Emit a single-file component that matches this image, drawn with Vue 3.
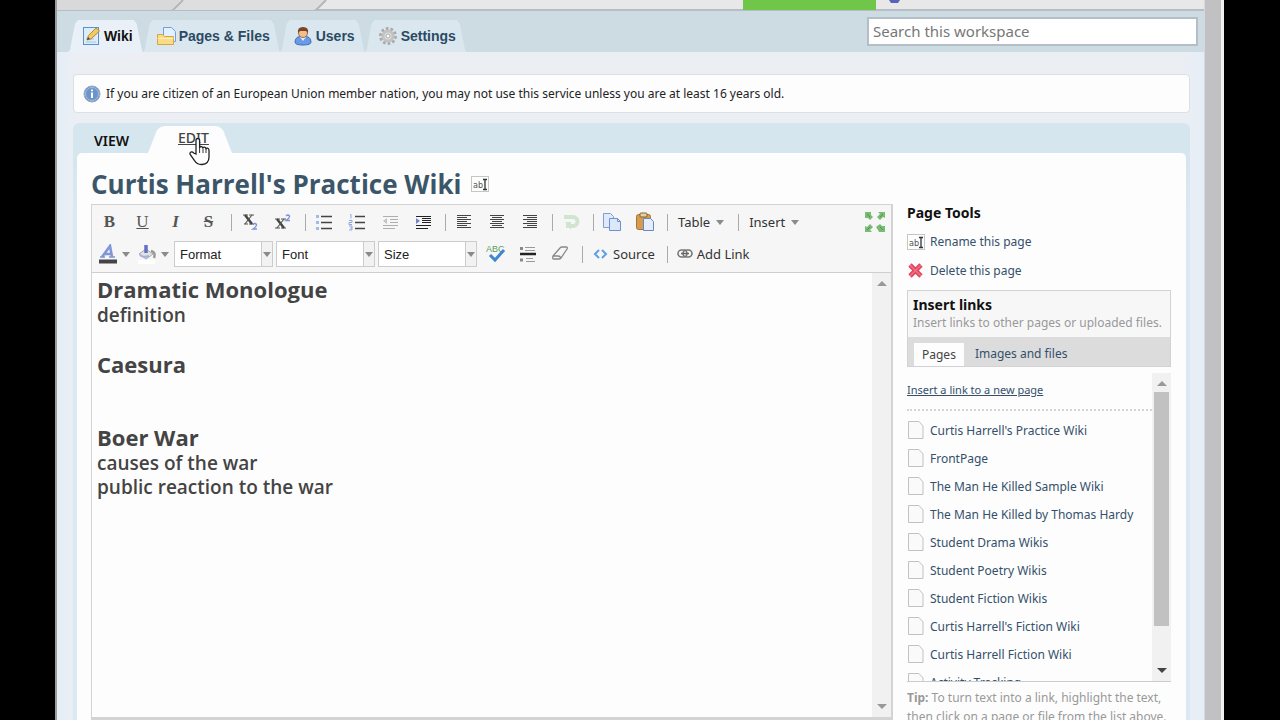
<script setup>
import { ref } from 'vue'

const svg = (body, w = 20, h = 20) =>
  `<svg width="${w}" height="${h}" viewBox="0 0 ${w} ${h}" fill="none" aria-hidden="true">${body}</svg>`

const lines = (rows, color = '#444') =>
  rows.map(([x, y, w]) => `<path d="M${x} ${y}.5h${w}" stroke="${color}"/>`).join('')

const fullRows = [[3, 3, 14], [3, 5, 10], [3, 7, 14], [3, 9, 10], [3, 11, 14], [3, 13, 10], [3, 15, 14]]
const shift = (d) => fullRows.map(([x, y, w]) => (w === 10 ? [x + d, y, w] : [x, y, w]))

const icons = {
  sub: svg('<path d="M3 3h5M9 3h5M4 12h4M9 12h5" stroke="#555"/><path d="M5 3l7 9" stroke="#444" stroke-width="2.4"/><path d="M12 3l-7 9" stroke="#555" stroke-width="1.2"/><path d="M13 12.500q2-2 3.500 0q.5 1.500-3.500 4.500h4" stroke="#7d95d6" stroke-width="1.400"/>'),
  sup: svg('<path d="M2 7h5M8 7h5M2 16h5M8 16h5" stroke="#555"/><path d="M4 7l7 9" stroke="#444" stroke-width="2.4"/><path d="M11 7l-7 9" stroke="#555" stroke-width="1.2"/><path d="M13 4q2-2 3.500 0q.5 1.500-3.500 4.500h4" stroke="#7d95d6" stroke-width="1.400"/>'),
  ul: svg('<path d="M7 4.500h11M7 10.500h11M7 16.500h11" stroke="#444" stroke-width="1.300"/><rect x="2" y="3" width="3" height="3" fill="#9dbce6"/><rect x="2" y="9" width="3" height="3" fill="#9dbce6"/><rect x="2" y="15" width="3" height="3" fill="#9dbce6"/>'),
  ol: svg('<path d="M8 4.500h10M8 10.500h10M8 16.500h10" stroke="#444" stroke-width="1.300"/><path d="M3 2.500h1v4M2 8.500h3v2h-3v2h3M2 14h3v4h-3M3 16h2" stroke="#8da9dc"/>'),
  outdent: svg('<g opacity=".4">' + lines([[3, 4, 15], [10, 7, 8], [10, 10, 8], [3, 13, 15], [3, 16, 12]]) + '<path d="M7 6v6l-4-3z" fill="#777"/></g>'),
  indent: svg(lines([[3, 4, 15], [9, 6, 9], [9, 8, 9], [9, 10, 9], [3, 13, 15], [3, 16, 12]], '#222') + '<path d="M3 6v6l4-3z" fill="#7189cc"/>'),
  left: svg(lines(fullRows)),
  center: svg(lines(shift(2))),
  right: svg(lines(shift(4))),
  undo: svg('<path d="M3 5h9a4 4 0 0 1 0 9H5" stroke="#cfe5cf" stroke-width="4"/><path d="M4 10h6v8z" fill="#cfe5cf"/>'),
  copy: svg('<path d="M1.500 1.500h7l3 3v11h-10z" fill="#dfe9fb" stroke="#7f9fd4"/><path d="M7.500 6.500h8l3 3v9h-11z" fill="#dce7fa" stroke="#6f90cc"/><path d="M15.500 6.500v3h3" stroke="#6f90cc"/>'),
  paste: svg('<rect x="1.500" y="2.500" width="14" height="15" rx="2" fill="#d59b4e" stroke="#ad7431"/><rect x="5" y="1" width="7" height="4" rx="1" fill="#e8d49b" stroke="#806338"/><path d="M8.500 6.500h7l3 3v9h-10z" fill="#e4edfb" stroke="#6a88bd"/>'),
  max: svg('<g fill="#79ba75"><path d="M1 1h6v3l2 2-3 3-2-2H1zM21 1h-7l2 2-3 3 3 3 3-3 2 1zM1 21h7l-2-2 3-3-3-3-3 3-2-1zM21 21h-6l-1-2-2-3 4-3 2 2h3z"/></g><path d="M3 3l3 3M19 3l-3 3M3 19l3-3M19 19l-3-3" stroke="#4c9549"/>', 22, 22),
  spell: svg('<text x="0" y="8" font-family="Liberation Sans" font-size="9" fill="#5c9b62">ABC</text><path d="M4 11l5 5 9-10" stroke="#3f87cf" stroke-width="3"/>'),
  hr: svg('<path d="M2 10h16" stroke="#222" stroke-width="2.500"/><path d="M7 3.500h10M7 6.500h10M8 14.500h7M8 17.500h9" stroke="#999"/><path d="M2 4.500h3M2 16h3" stroke="#888" stroke-width="3"/>'),
  erase: svg('<path d="M3 12l7-8q1-1 2-1h4q2 0 1 2l-6 9q-1 1-2 1H4q-2 0-1-3zM3 12h5q2 0 3 2" stroke="#888" stroke-width="1.300"/>'),
  source: svg('<path d="M6 3L2 7l4 4M9 3l4 4-4 4" stroke="#5da0e6" stroke-width="2"/>', 15, 14),
  link: svg('<rect x="1" y="2" width="9" height="7" rx="3.500" stroke="#777" stroke-width="1.600"/><rect x="6" y="2" width="9" height="7" rx="3.500" stroke="#777" stroke-width="1.600"/><path d="M4 5.500h8" stroke="#666" stroke-width="1.500"/>', 16, 12),
  color: svg('<path d="M4 13L12 2l2 11M6 10h7" stroke="#7f97d8" stroke-width="2.600"/><path d="M2 13h5M11 13h6" stroke="#7f97d8" stroke-width="1.500"/><path d="M1 17.500h18" stroke="#444" stroke-width="4"/>'),
  fill: svg('<rect x="1" y="16" width="17" height="4" fill="#fff"/><path d="M2 10l7-5 7 5-7 5z" fill="#e2e2e2" stroke="#aaa"/><path d="M9 1v8" stroke="#6170c4" stroke-width="3.500"/><path d="M3 11q3 3 9 1" stroke="#a3b0dd" stroke-width="2"/><path d="M14 7q5 1 3 7" stroke="#999" stroke-width="2.500"/>'),
  wiki: svg('<rect x="2.500" y="1.500" width="15" height="17" fill="#dcecfb" stroke="#5b91cd"/><path d="M5 13h8M5 16h10" stroke="#a5c8ec"/><path d="M6 14l1.500-4.500L15 2l3.500 3L10 13z" fill="#f1cc5d" stroke="#bb8b32"/><path d="M6 14l1-3 2 2z" fill="#444"/>'),
  files: svg('<path d="M7.500 1.500h8l4 4v10h-12z" fill="#e3f0fd" stroke="#6fa1dc"/><path d="M1.500 8.500h5l2 2h9v8h-16z" fill="#f9dc83" stroke="#d6a545"/><path d="M1.500 12.500h16" stroke="#fbeebb"/>'),
  user: svg('<path d="M2 16q0-6 8-6t8 6q0 3-8 3t-8-3z" fill="#6a9ae4" stroke="#3c6cc0"/><path d="M7 11l3 4 3-4z" fill="#e2edfc"/><circle cx="10" cy="7" r="4.500" fill="#f1be8e" stroke="#a66b40"/><path d="M5 7q-1-6 5-6t5 6l-2-2-6 0z" fill="#794526"/>'),
  gear: svg('<circle cx="10" cy="10" r="7.500" stroke="#aaa" stroke-width="3" stroke-dasharray="2.700 2"/><circle cx="10" cy="10" r="5" fill="#e0e0e0" stroke="#c2c2c2" stroke-width="3"/><circle cx="10" cy="10" r="2" fill="#fff" stroke="#aaa"/>'),
  info: svg('<circle cx="9" cy="9" r="8" fill="#6b94c8" stroke="#9aa9bd"/><circle cx="9" cy="9" r="6.500" stroke="#a3c0e5"/><path d="M9 7.500v5.500M9 4.500v1.800" stroke="#fff" stroke-width="2"/>', 18, 18),
  rename: svg('<rect x=".5" y=".5" width="17" height="15" fill="#fdfdfd" stroke="#c6c6c6"/><text x="2" y="12" font-family="DejaVu Sans Condensed" font-weight="400" font-size="9" fill="#555">ab</text><path d="M12 3.500h4M12 13.500h4M14 3.500v10" stroke="#333" stroke-width="1.300"/>', 18, 16),
  del: svg('<path d="M3 3l11 11M14 3L3 14" stroke="#e2455c" stroke-width="4.600"/><path d="M3 3l11 11M14 3L3 14" stroke="#f17383" stroke-width="1.500"/>', 17, 17),
  page: svg('<path d="M1.500 1.500h10.500l4 4.500v12.500h-14.500z" fill="#fafafa" stroke="#c2c2c2"/>', 18, 20),
}

const tabs = [
  { id: 'wiki', label: 'Wiki' },
  { id: 'files', label: 'Pages & Files' },
  { id: 'user', label: 'Users' },
  { id: 'gear', label: 'Settings' },
]

const groups = [
  [['b', 'Bold'], ['u', 'Underline'], ['i', 'Italic'], ['s', 'Strike']],
  [['sub', 'Subscript'], ['sup', 'Superscript']],
  [['ul', 'Bulleted list'], ['ol', 'Numbered list'], ['outdent', 'Outdent'], ['indent', 'Indent']],
  [['left', 'Align left'], ['center', 'Align center'], ['right', 'Align right']],
  [['undo', 'Undo']],
  [['copy', 'Copy'], ['paste', 'Paste']],
]
const letters = { b: 'B', u: 'U', i: 'I', s: 'S' }

const pages = [
  "Curtis Harrell's Practice Wiki", 'FrontPage', 'The Man He Killed Sample Wiki',
  'The Man He Killed by Thomas Hardy', 'Student Drama Wikis', 'Student Poetry Wikis',
  'Student Fiction Wikis', "Curtis Harrell's Fiction Wiki", 'Curtis Harrell Fiction Wiki', 'Activity Tracking',
]
const search = ref('')
</script>

<template>
  <div class="screen">
    <div class="window">
      <div class="page">
        <div class="crumbs">
          <svg class="slants" width="290" height="10" viewBox="0 0 290 10" aria-hidden="true">
            <path d="M0 0H124L114 10H0z" fill="#d9d9d9" />
            <path d="M126 0H267L257 10H116z" fill="#dedede" />
            <path d="M126 0L116 10M269 0L259 10" stroke="#b5b5b5" stroke-width="2" />
          </svg>
          <span class="green"></span>
          <svg class="spot" width="14" height="4" viewBox="0 0 14 4" aria-hidden="true"><path d="M1 0h11l-2 3H3z" fill="#5864b8" /></svg>
        </div>
        <header class="header">
          <nav class="tabs">
            <a v-for="(t, i) in tabs" :key="t.id" href="#" class="tab" :class="{ active: i === 0 }">
              <span class="ico" v-html="icons[t.id]"></span>{{ t.label }}
            </a>
          </nav>
          <input v-model="search" class="search" type="text" placeholder="Search this workspace" aria-label="Search this workspace">
        </header>

        <div class="notice">
          <span class="ico" v-html="icons.info"></span>
          <span>If you are citizen of an European Union member nation, you may not use this service unless you are at least 16 years old.</span>
        </div>

        <div class="frame">
          <nav class="modes">
            <a href="#" class="mode">VIEW</a>
            <a href="#" class="mode current">
              <span>EDIT</span>
              <svg class="cursor" width="24" height="30" viewBox="0 0 24 30" aria-hidden="true">
                <path d="M8 17V3.500q0-2 1.800-2t1.800 2V11q0-1.500 1.500-1.500T15 11.500q0-1.500 1.500-1.300t1.500 2q.4-1.400 1.600-1t1.400 2V20q0 7-7 7.500-5 .3-7.500-4L2.500 18q-1.300-2 .2-2.800 1.600-.8 3 .8z" fill="#fff" stroke="#222" stroke-width="1.300" />
                <path d="M11.600 11v5M15 12v4M18 12v4" stroke="#333" />
              </svg>
            </a>
          </nav>
          <div class="sheet">
            <main class="main">
              <h1>Curtis Harrell's Practice Wiki
                <button class="plain" aria-label="Rename" v-html="icons.rename"></button>
              </h1>
              <section class="editor">
                <div class="toolbar">
                  <div class="row">
                    <template v-for="g in groups" :key="g[0][0]">
                      <template v-for="b in g" :key="b[0]">
                        <button v-if="letters[b[0]]" class="tool letter" :class="b[0]" :aria-label="b[1]">{{ letters[b[0]] }}</button>
                        <button v-else class="tool" :aria-label="b[1]" v-html="icons[b[0]]"></button>
                      </template>
                      <span class="sep"></span>
                    </template>
                    <button class="word">Table<i class="arrow"></i></button>
                    <span class="sep"></span>
                    <button class="word">Insert<i class="arrow"></i></button>
                    <button class="tool max" aria-label="Maximize" v-html="icons.max"></button>
                  </div>
                  <div class="row">
                    <button class="swatch" aria-label="Text color"><span class="ico" v-html="icons.color"></span><i class="arrow"></i></button>
                    <button class="swatch" aria-label="Background color"><span class="ico" v-html="icons.fill"></span><i class="arrow"></i></button>
                    <label v-for="n in ['Format', 'Font', 'Size']" :key="n" class="combo">
                      <select :aria-label="n"><option>{{ n }}</option></select>
                      <span class="drop"><i class="arrow"></i></span>
                    </label>
                    <button class="tool" aria-label="Spell check" v-html="icons.spell"></button>
                    <button class="tool" aria-label="Horizontal line" v-html="icons.hr"></button>
                    <button class="tool" aria-label="Remove format" v-html="icons.erase"></button>
                    <span class="sep"></span>
                    <button class="word src"><span class="ico" v-html="icons.source"></span>Source</button>
                    <span class="sep"></span>
                    <button class="word lnk"><span class="ico" v-html="icons.link"></span>Add Link</button>
                  </div>
                </div>
                <div class="canvas">
                  <article class="doc" contenteditable="true" spellcheck="false">
                    <h2>Dramatic Monologue</h2>
                    <h3>definition</h3>
                    <h2 class="gap">Caesura</h2>
                    <h2 class="biggap">Boer War</h2>
                    <h3>causes of the war</h3>
                    <h3>public reaction to the war</h3>
                  </article>
                  <div class="scroll"><i class="up"></i><i class="down faint"></i></div>
                </div>
              </section>
            </main>

            <aside class="side">
              <h4>Page Tools</h4>
              <a href="#" class="item"><span class="ico" v-html="icons.rename"></span>Rename this page</a>
              <a href="#" class="item"><span class="ico" v-html="icons.del"></span>Delete this page</a>
              <div class="links">
                <div class="intro">
                  <h4>Insert links</h4>
                  <p>Insert links to other pages or uploaded files.</p>
                </div>
                <div class="subtabs">
                  <button class="sub on">Pages</button>
                  <button class="sub">Images and files</button>
                </div>
              </div>
              <div class="listbox">
                <div class="list">
                  <a href="#" class="new">Insert a link to a new page</a>
                  <ul>
                    <li v-for="p in pages" :key="p"><a href="#" class="item"><span class="ico" v-html="icons.page"></span>{{ p }}</a></li>
                  </ul>
                </div>
                <div class="scroll"><i class="up"></i><span class="thumb"></span><i class="down"></i></div>
              </div>
              <p class="tip"><b>Tip:</b> To turn text into a link, highlight the text,<br>then click on a page or file from the list above.</p>
            </aside>
          </div>
        </div>
      </div>
      <div class="winscroll"></div>
    </div>
  </div>
</template>

<style>
html, body { margin: 0; background: #000; }
</style>

<style scoped>
* { box-sizing: border-box; }
.screen {
  height: 100vh; overflow: hidden; background: #000; padding: 0 56px 0 55px;
  font-family: "Noto Sans", "Open Sans", sans-serif; font-size: 12px; color: #222;
}
.window { display: flex; min-height: 100vh; border-left: 2px solid #999da2; border-right: 3px solid #f2f2f2; background: #eaf0f6; }
.page { flex: 1; min-width: 0; background: linear-gradient(90deg, #e4edf6, #ebeff4 20px, #ebeff4 calc(100% - 20px), #e4edf6); }
.winscroll { width: 17px; background: #c1c1c4; border-left: 1px solid #d8d8dc; }
h1, h2, h3, h4, p, ul { margin: 0; padding: 0; }
ul { list-style: none; }
a { color: #34506b; text-decoration: none; }
button { font: inherit; color: inherit; background: none; border: 0; padding: 0; }
.ico, .ico :deep(svg), button :deep(svg) { display: block; flex: none; }

.crumbs { display: flex; height: 11px; background: #e8e8e8; border-bottom: 2px solid #b5bec4; }
.green { width: 133px; height: 10px; margin-left: auto; background: #70c648; }
.spot { margin: 0 302px 0 12px; }
.slants { flex: none; }
.header { display: flex; justify-content: space-between; height: 41px; background: #cddbe3; padding-left: 11px; }
.tabs { display: flex; padding-top: 9px; }
.tab {
  display: flex; align-items: center; gap: 3px; height: 32px; padding: 0 10px 0 13px;
  font: bold 14px "Liberation Sans", Arial, sans-serif; color: #2b4a63; background: #dae7ef;
  clip-path: polygon(0 100%, 2px 94%, 7px 12%, 10px 0, calc(100% - 9px) 0, calc(100% - 6px) 12%, calc(100% - 1px) 90%, 100% 100%);
}
.tab.active { color: #111; background: #eaf0f7; }
.search {
  width: 331px; height: 29px; margin: 6px 6px 0 0; padding: 0 4px 2px; border: 2px solid #b5bec6;
  font: 15px "Noto Sans", "Open Sans", sans-serif; color: #333; background: #fff; outline: 0;
}
.search::placeholder { color: #777; opacity: 1; }

.notice {
  display: flex; align-items: center; gap: 5px; height: 39px; margin: 22px 14px 10px 16px; padding: 0 9px;
  border: 1px solid #dcdfe5; border-radius: 4px; background: #fdfdfe;
}
.frame { margin: 0 14px 0 16px; padding: 0 4px; border-radius: 6px 6px 0 0; background: linear-gradient(#d6e6ee 40px, #dce8f3 90px); }
.modes { display: flex; height: 30px; font-weight: 600; font-size: 14px; }
.mode { color: #111; padding: 9px 0 0 17px; width: 78px; line-height: 18px; }
.mode.current {
  position: relative; width: 70px; height: 27px; margin-top: 3px; padding: 3px 0 0 23px; background: #fdfdfd; color: #444;
  border-radius: 10px 10px 0 0; font-weight: 500; z-index: 1;
}
.mode.current::before, .mode.current::after { content: ""; position: absolute; bottom: 0; border: 7px solid transparent; border-top: 0; border-bottom: 18px solid #fdfdfd; }
.mode.current::before { left: -7px; }
.mode.current::after { right: -7px; }
.mode span { text-decoration: underline; }
.cursor { position: absolute; left: 33px; top: 11px; }
.sheet { display: flex; gap: 14px; padding: 15px 15px 10px 14px; border-radius: 5px 5px 0 0; background: #fdfdfd; }
.main { flex: 1; min-width: 0; }
h1 { display: flex; align-items: center; gap: 10px; height: 36px; padding-bottom: 4px; font: bold 26px/32px "Open Sans", "Noto Sans", sans-serif; color: #3c5669; white-space: nowrap; }

.editor { border: 2px solid #d3d3d3; border-width: 1px 2px 3px 1px; }
.toolbar { height: 68px; padding: 1px 0 0; background: #f6f6f6; border-bottom: 1px solid #cfcfcf; }
.row { display: flex; align-items: center; height: 32px; padding-left: 1px; font-size: 13px; color: #333; }
.tool { display: flex; align-items: center; justify-content: center; width: 33px; height: 28px; flex: none; }
.row:last-child .tool { width: 32px; }
.letter { font: bold 17px "Liberation Serif", serif; color: #555; }
.u { font-weight: normal; text-decoration: underline; }
.i { font-style: italic; }
.s { text-decoration: line-through; }
.sep { width: 1px; height: 17px; margin: 0 1px 0 6px; background: #aaa; flex: none; }
.word { display: flex; align-items: center; gap: 6px; padding: 0 8px 0 9px; white-space: nowrap; }
.word.src { gap: 5px; padding: 0 6px 0 9px; }
.word.lnk { gap: 4px; padding: 0 0 0 8px; }
.arrow { width: 0; height: 0; border: 4px solid transparent; border-top: 5px solid #8a8a8a; border-bottom: 0; }
.max { margin-left: auto; }
.swatch { display: flex; align-items: center; gap: 4px; width: 39px; padding-left: 5px; }
.swatch + .combo { margin-left: 3px; }
.combo { display: flex; width: 99px; height: 26px; margin-right: 3px; border: 1px solid #ccc; background: #fff; }
.combo select { flex: 1; min-width: 0; appearance: none; border: 0; padding: 0 5px; background: #fff; font: 13px "Liberation Sans", Arial, sans-serif; color: #222; }
.drop { display: flex; align-items: center; justify-content: center; width: 11px; border-left: 1px solid #ccc; background: #f2f2f2; }
.canvas { display: flex; min-height: 444px; }
.doc { flex: 1; padding: 2px 5px; font-family: "Open Sans", "Noto Sans", sans-serif; color: #444; outline: 0; background: #fdfdfd; }
h2 { font-size: 22px; line-height: 28px; font-weight: 700; }
h3 { font-size: 19px; line-height: 24px; font-weight: 600; }
.gap { margin-top: 23px; }
.biggap { margin-top: 45px; }
.scroll { display: flex; flex-direction: column; justify-content: space-between; align-items: center; width: 19px; padding: 8px 0; background: #f1f1f1; }
.up, .down { width: 0; height: 0; border: 5px solid transparent; }
.up { border-bottom-color: #999; border-top: 0; }
.down { border-top-color: #444; border-bottom: 0; }
.down.faint { border-top-color: #999; }

.side { width: 264px; flex: none; padding-top: 35px; font-size: 12px; }
h4 { font-size: 14px; line-height: 20px; color: #111; }
.item { display: flex; align-items: center; gap: 5px; height: 28px; white-space: nowrap; }
.item .ico { width: 18px; }
.side > .item { height: 29px; }
.side > h4 { margin-bottom: 4px; }
.links { margin-top: 5px; border: 1px solid #d2d2d2; background: #f7f7f8; }
.intro { padding: 4px 5px; height: 46px; white-space: nowrap; }
.intro p { line-height: 16px; color: #999; }
.subtabs { display: flex; height: 29px; padding: 6px 0 0 6px; background: #dcdcdc; color: #34506b; }
.sub { padding: 0 11px; height: 21px; }
.sub.on { padding: 0 8px; height: 23px; background: #fdfdfd; color: #444; }
.listbox { display: flex; height: 309px; margin-top: 6px; border-bottom: 1px solid #ccc; overflow: hidden; }
.list { flex: 1; min-width: 0; }
.new { display: block; height: 38px; padding-top: 9px; border-bottom: 2px dotted #d5d5d5; font-size: 11px; line-height: 16px; text-decoration: underline; }
.list ul { padding-top: 5px; }
.thumb { width: 15px; height: 234px; margin: 6px 0 auto; background: #c1c1c1; }
.tip { padding-top: 6px; line-height: 19px; color: #999; white-space: nowrap; }
</style>
